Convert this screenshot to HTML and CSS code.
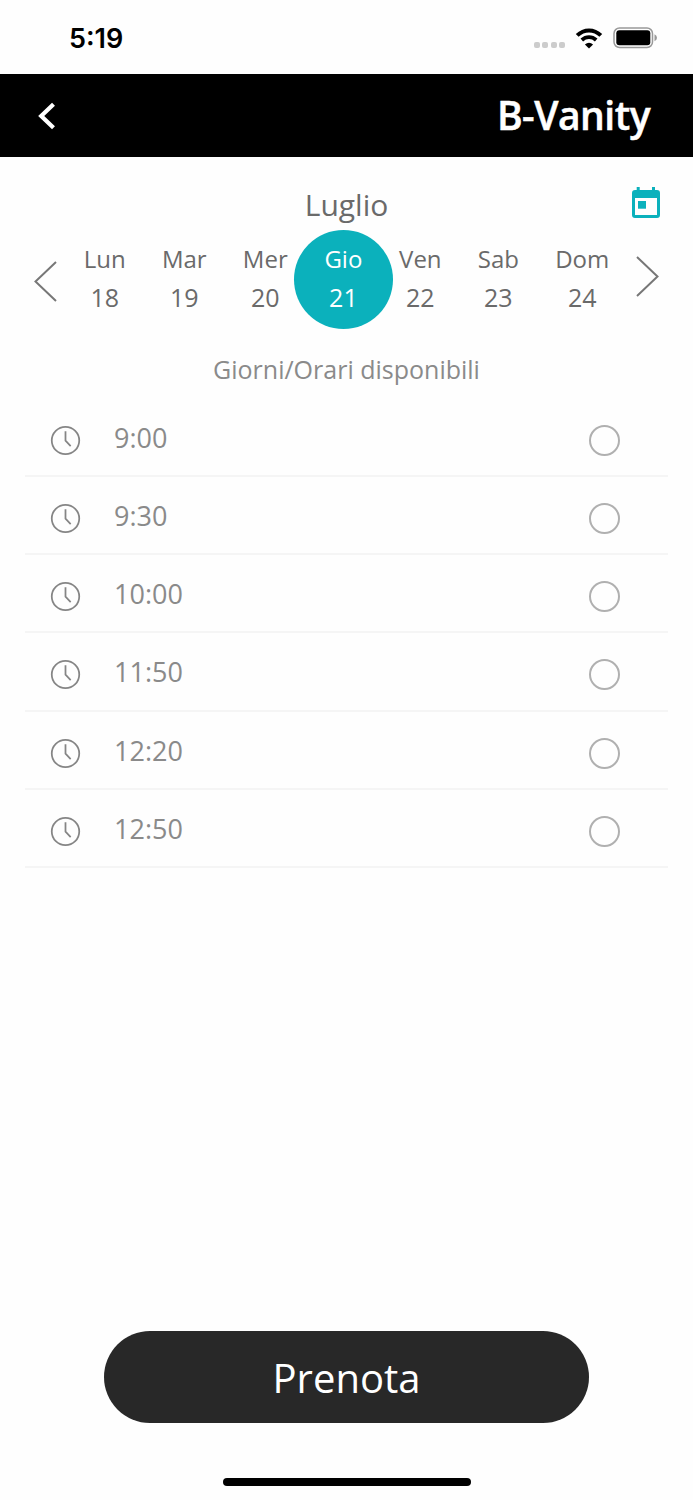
FILE: index.html
```html
<!DOCTYPE html>
<html lang="it">
<head>
    <meta charset="UTF-8">
    <meta name="viewport" content="width=device-width, initial-scale=1.0">
    <title>B-Vanity</title>
    <link rel="stylesheet" href="styles.css">
</head>
<body>
    <svg width="0" height="0" class="sprite">
        <symbol id="clock" viewBox="0 0 30 30">
            <circle cx="15" cy="15" r="13.3"/>
            <path d="M15 6V15.2L20 20.4"/>
        </symbol>
    </svg>

    <div class="status-bar">
        <span class="status-time">5:19</span>
        <div class="status-icons">
            <div class="dots"><i></i><i></i><i></i><i></i></div>
            <svg class="wifi" width="28" height="21" viewBox="0 0 28 21">
                <path d="M2.2 7.4C9 .7 19 .7 25.8 7.4" stroke-width="4"/>
                <path d="M6.8 12C11 8.2 17 8.2 21.2 12" stroke-width="3.8"/>
                <path class="wifi-dot" d="M14 20.5L9.9 16.4Q14 13.1 18.1 16.4Z"/>
            </svg>
            <svg width="44" height="22" viewBox="0 0 44 22">
                <rect x="1" y="1" width="38.5" height="19.5" rx="5.5" fill="none" stroke="#999" stroke-width="1.5"/>
                <rect x="3.3" y="3.2" width="34" height="15" rx="3" fill="#000"/>
                <path d="M41.5 7.3Q44 8.5 44 10.8Q44 13 41.5 14.2Z" fill="#999"/>
            </svg>
        </div>
    </div>

    <header class="header">
        <svg width="18" height="28" viewBox="0 0 18 28">
            <path d="M15.5 2.2L3.2 14L15.5 25.8" fill="none" stroke="#fff" stroke-width="4.2"/>
        </svg>
        <h1>B-Vanity</h1>
    </header>

    <main class="content">
        <div class="month">
            <h2>Luglio</h2>
            <svg class="calendar" width="28" height="31" viewBox="0 0 28 31">
                <path fill-rule="evenodd" d="M4.7 0H7.7V3H20V0H23V3H25Q28 3 28 6V28Q28 31 25 31H3Q0 31 0 28V6Q0 3 3 3H4.7ZM3 11V28H25V11Z"/>
                <rect x="6" y="14" width="8" height="7.7"/>
            </svg>
        </div>

        <div class="week">
            <svg class="arrow prev" width="23" height="41" viewBox="0 0 23 41">
                <path d="M22 1L1.5 20.5L22 40"/>
            </svg>
            <div class="days">
                <div class="day"><span>Lun</span><b>18</b></div>
                <div class="day"><span>Mar</span><b>19</b></div>
                <div class="day"><span>Mer</span><b>20</b></div>
                <div class="day selected"><span>Gio</span><b>21</b></div>
                <div class="day"><span>Ven</span><b>22</b></div>
                <div class="day"><span>Sab</span><b>23</b></div>
                <div class="day"><span>Dom</span><b>24</b></div>
            </div>
            <svg class="arrow next" width="23" height="41" viewBox="0 0 23 41">
                <path d="M1 1L21.5 20.5L1 40"/>
            </svg>
        </div>

        <p class="subtitle">Giorni/Orari disponibili</p>

        <ul class="slots">
            <li><svg class="clock"><use href="#clock"/></svg><span>9:00</span><i class="radio"></i></li>
            <li><svg class="clock"><use href="#clock"/></svg><span>9:30</span><i class="radio"></i></li>
            <li><svg class="clock"><use href="#clock"/></svg><span>10:00</span><i class="radio"></i></li>
            <li><svg class="clock"><use href="#clock"/></svg><span>11:50</span><i class="radio"></i></li>
            <li><svg class="clock"><use href="#clock"/></svg><span>12:20</span><i class="radio"></i></li>
            <li><svg class="clock"><use href="#clock"/></svg><span>12:50</span><i class="radio"></i></li>
        </ul>
    </main>

    <button type="button" class="submit-btn">Prenota</button>
    <div class="home-bar"></div>
</body>
</html>
```

FILE: styles.css
```css
* {
    box-sizing: border-box;
    margin: 0;
    padding: 0;
}
body {
    font-family: "Open Sans", "Noto Sans", sans-serif;
    background: #fefefe;
    color: #6a6a6a;
    height: 1500px;
    display: flex;
    flex-direction: column;
    align-items: center;
    overflow: hidden;
}
svg {
    display: block;
    flex: none;
}
.sprite {
    position: absolute;
}
.status-bar {
    width: 100%;
    height: 74px;
    padding: 2px 36px 0 69px;
    display: flex;
    align-items: center;
    justify-content: space-between;
}
.status-time {
    font-family: Inter, sans-serif;
    font-size: 27px;
    font-weight: 600;
    color: #000;
}
.status-icons {
    display: flex;
    align-items: center;
    gap: 10px;
}
.dots {
    display: flex;
    gap: 2.5px;
    padding-top: 14px;
}
.dots i {
    width: 6px;
    height: 6px;
    border-radius: 2px;
    background: #ccc;
}
.wifi path {
    fill: none;
    stroke: #000;
}
.wifi .wifi-dot {
    fill: #000;
    stroke: none;
}
.header {
    width: 100%;
    height: 83px;
    padding: 0 43px 0 38px;
    background: #000;
    display: flex;
    align-items: center;
    justify-content: space-between;
}
.header h1 {
    margin-top: -2px;
    color: #fff;
    font-size: 39px;
    font-weight: 600;
    letter-spacing: -0.5px;
    line-height: 50px;
    -webkit-text-stroke: 0.5px #fff;
}
.content {
    width: 100%;
    flex: 1;
}
.month {
    height: 73px;
    padding: 28px 33px 0;
    display: grid;
    grid-template-columns: 28px 1fr 28px;
}
.month h2 {
    grid-column: 2;
    font-size: 30px;
    font-weight: 400;
    line-height: 40px;
    text-align: center;
}
.calendar {
    fill: #0bb1bc;
    margin-top: 2px;
}
.week {
    height: 98px;
    padding: 0 34px;
    display: flex;
    justify-content: space-between;
}
.arrow {
    fill: none;
    stroke: #777;
    stroke-width: 2;
}
.prev {
    margin-top: 31px;
}
.next {
    margin-top: 26px;
}
.days {
    display: flex;
    gap: 36.2px;
}
.day {
    display: flex;
    flex-direction: column;
    align-items: center;
    padding-top: 10px;
}
.day span {
    font-size: 24px;
    line-height: 38px;
}
.day b {
    font-size: 25px;
    font-weight: 400;
    line-height: 38px;
}
.day.selected {
    width: 99px;
    height: 99px;
    margin: 0 -30px;
    border-radius: 50%;
    background: #0bb1bc;
    color: #fff;
}
.subtitle {
    margin-top: 23px;
    font-size: 25px;
    line-height: 36px;
    text-align: center;
    color: #8a8a8a;
}
.slots {
    margin: 11.8px 25px 0;
    list-style: none;
}
.slots li {
    height: 78.2px;
    padding: 7px 48px 0 25px;
    border-bottom: 2px solid #f5f5f5;
    display: flex;
    align-items: center;
}
.slots span {
    margin: -5px auto 0 33px;
    font-size: 27px;
    line-height: 36px;
    color: #8a8a8a;
}
.clock {
    width: 31px;
    height: 31px;
    fill: none;
    stroke: #858585;
    stroke-width: 1.7;
}
.radio {
    width: 31px;
    height: 31px;
    border: 2px solid #b0b0b0;
    border-radius: 50%;
}
.submit-btn {
    width: 485px;
    height: 92px;
    border: none;
    border-radius: 46px;
    background: #282828;
    color: #fff;
    font-family: inherit;
    font-size: 40px;
}
.home-bar {
    width: 248px;
    height: 8px;
    margin: 55px 0 14px;
    border-radius: 4px;
    background: #000;
}
```
